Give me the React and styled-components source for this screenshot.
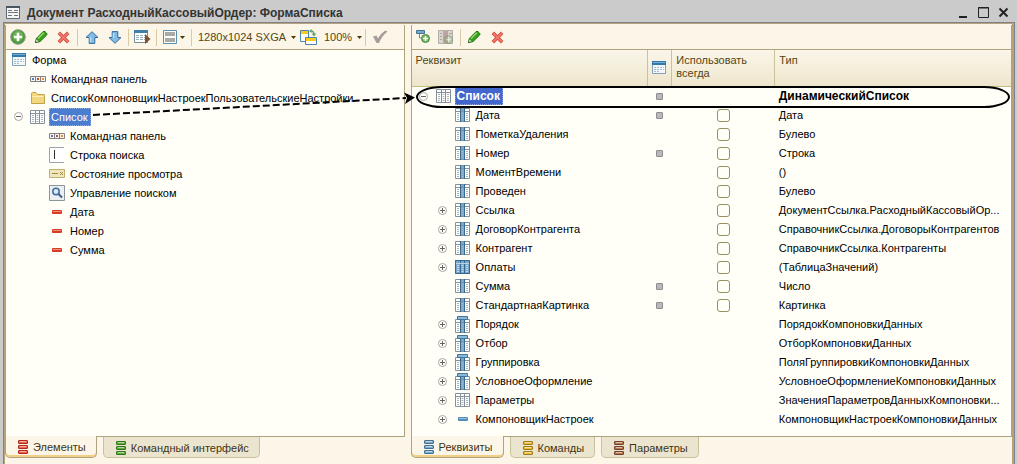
import React, { useState } from 'react';
import styled, { createGlobalStyle, css } from 'styled-components';

const colors = {
  paper: '#fffff8',
  cream: '#fbf6e8',
  tab: '#ebe5cf',
  line: '#aea37c',
  tan: '#b3a47e',
  title: '#cbcbcb',
  brown: '#574513',
  selected: '#4a7cd0',
  focused: '#4267cc'
};

const sizes = {
  text: '11px',
  strong: '12px'
};

const GlobalStyle = createGlobalStyle`
  *, *::before, *::after {
    box-sizing: border-box;
  }
  body {
    margin: 0;
    background: ${colors.title};
    color: #000;
    font-family: 'Liberation Sans', Arial, sans-serif;
    font-size: ${sizes.text};
    line-height: 14px;
  }
  button, select, input {
    font: inherit;
    color: inherit;
    margin: 0;
  }
`;

const Window = styled.div`
  position: relative;
  min-height: 100vh;
  display: flex;
  flex-direction: column;
  padding: 0 2px 0 3px;
  background: ${colors.title};
`;

const TitleBar = styled.header`
  display: flex;
  align-items: center;
  height: 22px;
  padding: 3px 2px 0 3px;
  color: #333;
`;

const Title = styled.h1`
  flex: 1;
  margin: 0 0 0 7px;
  font-size: ${sizes.strong};
  line-height: 18px;
  font-weight: bold;
`;

const WindowButton = styled.button`
  display: flex;
  width: 20px;
  padding: 0;
  justify-content: center;
  border: 0;
  background: none;
  color: #222;
`;

const Body = styled.main`
  flex: 1;
  display: flex;
  gap: 6px;
  border: 1px solid #82808a;
  border-bottom: 0;
  box-shadow: inset 1px 1px ${colors.tan}, inset -2px 0 ${colors.tan};
  padding: 2px 2px 0 1px;
  background: ${colors.cream};
`;

const Pane = styled.section`
  flex: ${({ $grow }) => $grow} 1 0;
  min-width: 0;
  display: flex;
  flex-direction: column;
`;

const Frame = styled.div`
  flex: 1;
  display: flex;
  flex-direction: column;
  border: 1px solid ${colors.line};
  border-top: 0;
  background: ${colors.paper};
`;

const Toolbar = styled.div`
  display: flex;
  align-items: center;
  height: 25px;
  border-bottom: 1px solid ${colors.line};
  background: ${colors.cream};
  color: ${colors.brown};
`;

const ToolButton = styled.button`
  display: flex;
  align-items: center;
  justify-content: center;
  gap: 3px;
  width: ${({ $wide }) => ($wide ? 30 : 23)}px;
  height: 22px;
  padding: 0;
  border: 0;
  background: none;
`;

const Separator = styled.span`
  width: 1px;
  height: 17px;
  margin: 0 2px;
  background: #d8cba3;
`;

const Picker = styled.label`
  display: flex;
  align-items: center;
  gap: 3px;
  padding: 0 1px 0 4px;
`;

const Select = styled.select`
  appearance: none;
  width: ${({ $width }) => $width}px;
  padding: 0;
  border: 0;
  background: none;
`;

const Tree = styled.ul`
  list-style: none;
  margin: 0;
  padding: 0;
`;

const TreeRow = styled.li`
  height: 19px;
  padding-left: ${({ $level }) => ($level ? $level * 19 - 14 : 5)}px;
`;

const Node = styled.div`
  display: flex;
  align-items: center;
  gap: 5px;
  height: 19px;
`;

const Expander = styled.button`
  display: flex;
  flex: none;
  width: 14px;
  padding: 0;
  justify-content: center;
  border: 0;
  background: none;
`;

const Slot = styled.span`
  flex: none;
  display: flex;
  justify-content: center;
  width: 16px;
`;

const Label = styled.span`
  white-space: nowrap;
  ${({ $mark }) =>
    $mark &&
    css`
      margin-left: -2px;
      padding: 2px 3px 2px 2px;
      color: #fff;
      background: ${$mark === 'focus' ? colors.focused : colors.selected};
      outline: 1px dotted ${$mark === 'focus' ? '#8ba2e0' : '#8fb0e4'};
      outline-offset: -1px;
    `};
`;

const TableArea = styled.div`
  position: relative;
`;

const Table = styled.table`
  width: 100%;
  table-layout: fixed;
  border-collapse: collapse;
`;

const Col = styled.col`
  width: ${({ $width }) => $width}px;
`;

const Head = styled.th`
  height: 36px;
  padding: 4px;
  border-right: 1px solid #cdc197;
  border-bottom: 1px solid #c4bd84;
  background: linear-gradient(#faf6e9, #eee5cc);
  color: ${colors.brown};
  font-weight: normal;
  line-height: 13px;
  text-align: left;
  vertical-align: top;
  &:last-child {
    border-right: 0;
  }
`;

const IconHead = styled(Head)`
  vertical-align: middle;
  & svg {
    display: block;
  }
`;

const Row = styled.tr`
  height: 19px;
  ${({ $bold }) =>
    $bold &&
    css`
      font-size: ${sizes.strong};
      font-weight: bold;
    `};
`;

const NameCell = styled.td`
  padding: 0 0 0 ${({ $level }) => 5 + $level * 19}px;
`;

const MarkCell = styled.td`
  padding: 0;
  text-align: center;
`;

const TypeCell = styled.td`
  padding: 0 4px;
  white-space: nowrap;
`;

const Dot = styled.span`
  display: block;
  width: 7px;
  height: 7px;
  margin: 0 auto;
  border: 1px solid #8d8d8d;
  border-radius: 1px;
  background: #b9b9bd;
`;

const Check = styled.input`
  appearance: none;
  display: block;
  width: 13px;
  height: 13px;
  margin: 0 auto;
  border: 1px solid #96915f;
  border-radius: 3px;
  background: ${colors.paper};
  &:checked {
    background: #96915f;
  }
`;

// the ring drawn round the main attribute
const Ring = styled.div`
  position: absolute;
  top: 36px;
  left: 4px;
  right: 1px;
  height: 22px;
  border: 2px solid #000;
  border-radius: 26px / 11px;
  pointer-events: none;
`;

const Arrow = styled.svg`
  position: absolute;
  left: 90px;
  top: 90px;
  pointer-events: none;
`;

const Tabs = styled.div`
  display: flex;
  gap: 6px;
  height: 27px;
  align-items: flex-start;
`;

const Tab = styled.button`
  display: flex;
  align-items: center;
  gap: 5px;
  height: 21px;
  padding: 1px 10px 0 12px;
  border: 1px solid #c9c09c;
  border-top: 0;
  border-radius: 0 0 5px 5px;
  background: ${colors.tab};
  color: #3f3413;
  white-space: nowrap;
  ${({ $active }) =>
    $active &&
    css`
      height: 22px;
      margin-top: -1px;
      border-color: ${colors.line};
      background: ${colors.cream};
      box-shadow: inset 0 -2px #f3cf86;
    `};
`;

const Caret = () => (
  <svg width="5" height="3" viewBox="0 0 5 3">
    <path d="M0 0h5L2.5 3z" fill="#4a3808" />
  </svg>
);

const AddIcon = () => (
  <svg width="16" height="16" viewBox="0 0 16 16">
    <circle cx="8" cy="8" r="7.3" fill="#4e9a3e" stroke="#8d9a86" />
    <circle cx="8" cy="7" r="5.2" fill="#69b153" />
    <path d="M8 3.8v8.4M3.8 8h8.4" stroke="#fff" strokeWidth="2.6" />
  </svg>
);

const PencilIcon = () => (
  <svg width="14" height="14" viewBox="0 0 14 14">
    <path d="M1.5 12.5l1-4.2L9 1.7q1-.8 2 0l1.6 1.5q.8 1 0 1.9L6 11.6z" fill="#36a019" stroke="#207512" />
    <path d="M4 8.5l5.8-5.7" stroke="#91d86d" strokeWidth="1.6" />
    <path d="M1.5 12.5l.8-3.6 2.8 2.7z" fill="#f6f5e5" stroke="#207512" strokeWidth=".6" />
    <path d="M1.2 12.8l.4-1.5 1.2 1.1z" fill="#173e0d" />
  </svg>
);

const DeleteIcon = () => (
  <svg width="13" height="13" viewBox="0 0 13 13">
    <path d="M1.8 1.8l9.4 9.4M11.2 1.8l-9.4 9.4" stroke="#d0483b" strokeWidth="3.4" />
    <path d="M1.8 1.8l9.4 9.4M11.2 1.8l-9.4 9.4" stroke="#f5796a" strokeWidth="1.8" />
  </svg>
);

const MoveIcon = ({ down }) => (
  <svg width="14" height="13" viewBox="0 0 14 13">
    <path
      d={down ? 'M7 12.3L13 6.5H9.8V.6H4.2v5.9H1z' : 'M7 .7L1 6.5h3.2v5.9h5.6V6.5H13z'}
      fill="#7fbde8"
      stroke="#34699d"
    />
    <path d={down ? 'M5.5 2v5' : 'M5.5 6v5'} stroke="#b8dcf4" strokeWidth="1.5" />
  </svg>
);

const PreviewIcon = () => (
  <svg width="17" height="14" viewBox="0 0 17 14">
    <path d="M.5.5h13v12H.5z" fill="#fff" stroke="#778b98" />
    <path d="M0 0h14v3H0z" fill="#3f7fa8" />
    <path d="M2 5.5h10M2 7.5h10M2 9.5h10" stroke="#9bb0bd" strokeDasharray="3 1" />
    <path d="M11 4l5.500 5-5.500 5z" fill="#81502f" />
  </svg>
);

const LayoutIcon = () => (
  <svg width="14" height="14" viewBox="0 0 14 14">
    <path d="M.5.5h13v13H.5z" fill="#fdfdf8" stroke="#5d8fae" />
    <path d="M2 2h10v4H2zM2 8h10v4H2z" fill="#a9a9a6" />
  </svg>
);

const RotateIcon = () => (
  <svg width="17" height="17" viewBox="0 0 17 17">
    <path d="M.5 1.5h8v11h-8z" fill="#fff" stroke="#4d84b0" />
    <path d="M1 2h7v3H1z" fill="#ffc91a" />
    <path d="M5.5 8.500h11v7h-11z" fill="#fff" stroke="#4d84b0" />
    <path d="M6 9h10v3H6z" fill="#ffc91a" />
    <path d="M10 2q4-.5 4 3.500" fill="none" stroke="#61a56a" strokeWidth="1.4" />
    <path d="M11.500 4.500h5L14 7.500zM11.500 0v4L9 2z" fill="#61a56a" />
  </svg>
);

const ApplyIcon = () => (
  <svg width="16" height="14" viewBox="0 0 16 14">
    <path d="M1 6.500l3.500-1 1.500 3Q9 3 13.500.500L15.500 1.500Q10 6 7 13H4.500z" fill="#aa9c9c" />
  </svg>
);

const Plus = () => (
  <g>
    <circle cx="4.500" cy="4.500" r="4" fill="#70b55c" stroke="#58864c" />
    <path d="M4.500 2v5M2 4.500h5" stroke="#fff" strokeWidth="1.5" />
  </g>
);

const AddAttributeIcon = () => (
  <svg width="15" height="14" viewBox="0 0 15 14">
    <path d="M.5.5h8v3h-8z" fill="#79a9ca" stroke="#447296" />
    <path d="M3.500 4v4h2" fill="none" stroke="#7a8b95" />
    <g transform="translate(5 4)">
      <Plus />
    </g>
  </svg>
);

const AddColumnIcon = () => (
  <svg width="16" height="15" viewBox="0 0 16 15">
    <path d="M.5.5h14v13H.5z" fill="#dcd6cc" stroke="#b3aea8" />
    <path d="M5 1h5v12H5z" fill="#bfa3a6" />
    <path d="M2 3.500h2M2 6.500h2M2 9.500h2M11 3.500h3" stroke="#aaa49f" />
    <g transform="translate(6 5)" opacity=".4">
      <Plus />
    </g>
  </svg>
);

const FormIcon = () => (
  <svg width="14" height="13" viewBox="0 0 14 13">
    <path d="M.5.5h13v12H.5z" fill="#f4f8fb" stroke="#84a0b4" />
    <path d="M0 0h14v4H0z" fill="#3379a9" />
    <path d="M1 1.500h12" stroke="#74afd5" />
    <path d="M2 6.500h10M2 8.500h10M2 10.500h6" stroke="#a7bccb" strokeDasharray="2 1" />
  </svg>
);

const DocumentIcon = () => (
  <svg width="14" height="13" viewBox="0 0 14 13">
    <path d="M.5.5h13v12H.5z" fill="#f5f5f5" stroke="#626b72" />
    <path d="M0 1h14" stroke="#49565f" strokeWidth="2" />
    <path d="M2 4.500h4M8 4.500h4M2 6.500h10M2 9.500h4M8 9.500h4" stroke="#6e777e" />
  </svg>
);

const PanelIcon = () => (
  <svg width="16" height="6" viewBox="0 0 16 6">
    <path d="M.5.5h15v5H.5zM5.500 0v6M10.500 0v6" fill="#f5f2ef" stroke="#86817f" />
    <path d="M2 2h2v2H2z" fill="#5284bc" />
    <path d="M7 2h2v2H7z" fill="#cd4535" />
    <path d="M12 2h2v2h-2z" fill="#d79a36" />
  </svg>
);

const FolderIcon = () => (
  <svg width="14" height="12" viewBox="0 0 14 12">
    <path d="M.5 11.500V1.500q0-1 1-1H5l1.500 2H13q.5 0 .5.5v8.500z" fill="#f2d77e" stroke="#c4a14b" />
    <path d="M1.500 4.500h11" stroke="#fff0b5" />
  </svg>
);

const TableIcon = ({ fill, cap }) => (
  <svg width="16" height={cap ? 17 : 14} viewBox={cap ? '0 -3 16 17' : '0 0 16 14'}>
    <path d="M.5.5h14v13H.5z" fill="#fff" />
    {fill === 'mid' && <path d="M5 0h5v14H5z" fill="#78a9cd" />}
    {fill === 'all' && <path d="M0 0h15v14H0z" fill="#78a9cd" />}
    <path
      d="M.5.5h14v13H.5zM5.500 1v13M9.500 1v13"
      fill="none"
      stroke={fill === 'all' ? '#38678f' : '#84919b'}
    />
    <path d="M1 3.500h13" stroke={fill === 'all' ? '#b7d4e8' : '#84919b'} />
    <path d="M3 5v8M7.500 5v8M12 5v8" stroke={fill === 'all' ? '#c1dcec' : '#aab4bb'} strokeWidth="2" strokeDasharray="1 1" />
    {fill === 'mid' && <path d="M5.500 0v14M9.500 0v14" stroke="#37698f" />}
    {cap && <path d="M2.500-2.500h10v3h-10z" fill="#8bbad8" stroke="#40759d" />}
  </svg>
);

const SearchLineIcon = () => (
  <svg width="16" height="16" viewBox="0 0 16 16">
    <path d="M15 .5H.5v15H15" fill="#fff" stroke="#a0a3ad" />
    <path d="M5.500 3v9" stroke="#333" />
  </svg>
);

const ViewStateIcon = () => (
  <svg width="16" height="9" viewBox="0 0 16 9">
    <path d="M.5.5h15v8H.5z" fill="#f0e6bb" stroke="#c1ae72" />
    <path d="M3 4.500h6M11 3l3 3M14 3l-3 3" stroke="#9e8846" />
  </svg>
);

const SearchControlIcon = () => (
  <svg width="16" height="16" viewBox="0 0 16 16">
    <path d="M.5.5h15v15H.5z" fill="#eceff1" stroke="#8c949b" />
    <circle cx="7" cy="6.500" r="3.200" fill="#dcebf7" stroke="#416d9d" strokeWidth="1.500" />
    <path d="M9.500 9l3.500 3.500" stroke="#365f8e" strokeWidth="2" />
  </svg>
);

const BarIcon = ({ color }) => (
  <svg width="10" height="4" viewBox="0 0 10 4">
    <rect width="10" height="4" rx="1" fill={color} />
    <path d="M1 1.500h8" stroke="#fff" strokeOpacity=".45" />
  </svg>
);

const StackIcon = ({ color, edge }) => (
  <svg width="10" height="14" viewBox="0 0 10 14">
    {[0, 5, 10].map(y => (
      <g key={y}>
        <rect x=".5" y={y + 0.5} width="9" height="3" rx=".5" fill={color} stroke={edge} />
        <path d={`M2 ${y + 1.5}h6`} stroke="#fff" strokeOpacity=".5" />
      </g>
    ))}
  </svg>
);

const ToggleIcon = ({ open }) => (
  <svg width="9" height="9" viewBox="0 0 9 9">
    <circle cx="4.500" cy="4.500" r="4" fill="#fff" stroke="#a9a7a0" />
    <path d={open ? 'M2 4.500h5' : 'M2 4.500h5M4.500 2v5'} stroke="#68665f" />
  </svg>
);

const elements = [
  { level: 0, icon: <FormIcon />, name: 'Форма' },
  { level: 1, icon: <PanelIcon />, name: 'Командная панель' },
  { level: 1, icon: <FolderIcon />, name: 'СписокКомпоновщикНастроекПользовательскиеНастройки' },
  { level: 1, icon: <TableIcon />, name: 'Список', open: true, mark: 'select' },
  { level: 2, icon: <PanelIcon />, name: 'Командная панель' },
  { level: 2, icon: <SearchLineIcon />, name: 'Строка поиска' },
  { level: 2, icon: <ViewStateIcon />, name: 'Состояние просмотра' },
  { level: 2, icon: <SearchControlIcon />, name: 'Управление поиском' },
  { level: 2, icon: <BarIcon color="#d93a20" />, name: 'Дата' },
  { level: 2, icon: <BarIcon color="#d93a20" />, name: 'Номер' },
  { level: 2, icon: <BarIcon color="#d93a20" />, name: 'Сумма' }
];

const field = <TableIcon fill="mid" />;
const setting = <TableIcon fill="mid" cap />;

const attributes = [
  { name: 'Список', type: 'ДинамическийСписок', icon: <TableIcon />, root: true, dot: true },
  { name: 'Дата', type: 'Дата', icon: field, dot: true, check: true },
  { name: 'ПометкаУдаления', type: 'Булево', icon: field, check: true },
  { name: 'Номер', type: 'Строка', icon: field, dot: true, check: true },
  { name: 'МоментВремени', type: '()', icon: field, check: true },
  { name: 'Проведен', type: 'Булево', icon: field, check: true },
  { name: 'Ссылка', type: 'ДокументСсылка.РасходныйКассовыйОр...', icon: field, more: true, check: true },
  { name: 'ДоговорКонтрагента', type: 'СправочникСсылка.ДоговорыКонтрагентов', icon: field, more: true, check: true },
  { name: 'Контрагент', type: 'СправочникСсылка.Контрагенты', icon: field, more: true, check: true },
  { name: 'Оплаты', type: '(ТаблицаЗначений)', icon: <TableIcon fill="all" />, more: true, check: true },
  { name: 'Сумма', type: 'Число', icon: field, dot: true, check: true },
  { name: 'СтандартнаяКартинка', type: 'Картинка', icon: field, dot: true, check: true },
  { name: 'Порядок', type: 'ПорядокКомпоновкиДанных', icon: setting, more: true },
  { name: 'Отбор', type: 'ОтборКомпоновкиДанных', icon: setting, more: true },
  { name: 'Группировка', type: 'ПоляГруппировкиКомпоновкиДанных', icon: setting, more: true },
  { name: 'УсловноеОформление', type: 'УсловноеОформлениеКомпоновкиДанных', icon: setting, more: true },
  { name: 'Параметры', type: 'ЗначенияПараметровДанныхКомпоновки...', icon: <TableIcon />, more: true },
  { name: 'КомпоновщикНастроек', type: 'КомпоновщикНастроекКомпоновкиДанных', icon: <BarIcon color="#4f8fba" />, more: true }
];

const TabStrip = ({ items }) => {
  const [active, setActive] = useState(0);
  return (
    <Tabs role="tablist">
      {items.map((item, i) => (
        <Tab
          key={item.name}
          role="tab"
          aria-selected={i === active}
          $active={i === active}
          onClick={() => setActive(i)}
        >
          <StackIcon color={item.color} edge={item.edge} />
          {item.name}
        </Tab>
      ))}
    </Tabs>
  );
};

const ElementsPane = () => (
  <Pane $grow={400}>
    <Frame>
      <Toolbar>
        <ToolButton aria-label="Добавить"><AddIcon /></ToolButton>
        <ToolButton aria-label="Изменить"><PencilIcon /></ToolButton>
        <ToolButton aria-label="Удалить"><DeleteIcon /></ToolButton>
        <Separator />
        <ToolButton aria-label="Вверх"><MoveIcon /></ToolButton>
        <ToolButton aria-label="Вниз"><MoveIcon down /></ToolButton>
        <Separator />
        <ToolButton aria-label="Проверить"><PreviewIcon /></ToolButton>
        <Separator />
        <ToolButton aria-label="Разделение" $wide><LayoutIcon /><Caret /></ToolButton>
        <Separator />
        <Picker>
          <Select $width={90} aria-label="Разрешение">
            <option>1280x1024 SXGA</option>
          </Select>
          <Caret />
        </Picker>
        <ToolButton aria-label="Повернуть"><RotateIcon /></ToolButton>
        <Picker>
          <Select $width={30} aria-label="Масштаб">
            <option>100%</option>
          </Select>
          <Caret />
        </Picker>
        <Separator />
        <ToolButton aria-label="Применить"><ApplyIcon /></ToolButton>
      </Toolbar>
      <Tree>
        {elements.map((el, i) => (
          <TreeRow key={i} $level={el.level}>
            <Node>
              {el.level > 0 && (el.open ? (
                <Expander aria-label="Свернуть"><ToggleIcon open /></Expander>
              ) : (
                <Expander as="span" />
              ))}
              <Slot>{el.icon}</Slot>
              <Label $mark={el.mark}>{el.name}</Label>
            </Node>
          </TreeRow>
        ))}
      </Tree>
    </Frame>
    <TabStrip
      items={[
        { name: 'Элементы', color: '#ee624d', edge: '#ad2b1c' },
        { name: 'Командный интерфейс', color: '#63ad3d', edge: '#34731d' }
      ]}
    />
  </Pane>
);

const AttributesPane = () => (
  <Pane $grow={602}>
    <Frame>
      <Toolbar>
        <ToolButton aria-label="Добавить реквизит"><AddAttributeIcon /></ToolButton>
        <ToolButton aria-label="Добавить колонку" disabled><AddColumnIcon /></ToolButton>
        <Separator />
        <ToolButton aria-label="Изменить"><PencilIcon /></ToolButton>
        <ToolButton aria-label="Удалить"><DeleteIcon /></ToolButton>
      </Toolbar>
      <TableArea>
        <Table>
          <colgroup>
            <Col />
            <Col $width={24} />
            <Col $width={103} />
            <Col />
          </colgroup>
          <thead>
            <tr>
              <Head>Реквизит</Head>
              <IconHead aria-label="На форме"><FormIcon /></IconHead>
              <Head>Использовать всегда</Head>
              <Head>Тип</Head>
            </tr>
          </thead>
          <tbody>
            {attributes.map(attr => (
              <Row key={attr.name} $bold={attr.root}>
                <NameCell $level={attr.root ? 0 : 1}>
                  <Node>
                    {attr.root || attr.more ? (
                      <Expander aria-label={attr.root ? 'Свернуть' : 'Развернуть'}>
                        <ToggleIcon open={attr.root} />
                      </Expander>
                    ) : (
                      <Expander as="span" />
                    )}
                    <Slot>{attr.icon}</Slot>
                    <Label $mark={attr.root && 'focus'}>{attr.name}</Label>
                  </Node>
                </NameCell>
                <MarkCell>{attr.dot && <Dot />}</MarkCell>
                <MarkCell>
                  {attr.check && <Check type="checkbox" aria-label={attr.name} />}
                </MarkCell>
                <TypeCell>{attr.type}</TypeCell>
              </Row>
            ))}
          </tbody>
        </Table>
        <Ring />
      </TableArea>
    </Frame>
    <TabStrip
      items={[
        { name: 'Реквизиты', color: '#7faccb', edge: '#416f96' },
        { name: 'Команды', color: '#e6bd3d', edge: '#a37c17' },
        { name: 'Параметры', color: '#b77b57', edge: '#733f26' }
      ]}
    />
  </Pane>
);

const App = () => (
  <Window>
    <GlobalStyle />
    <TitleBar>
      <DocumentIcon />
      <Title>Документ РасходныйКассовыйОрдер: ФормаСписка</Title>
      <WindowButton aria-label="Свернуть">
        <svg width="11" height="11"><path d="M1 10h8" stroke="currentColor" strokeWidth="2" /></svg>
      </WindowButton>
      <WindowButton aria-label="Развернуть">
        <svg width="11" height="11">
          <path d="M.5.5h10v10H.5zM0 1h11" fill="none" stroke="currentColor" />
        </svg>
      </WindowButton>
      <WindowButton aria-label="Закрыть">
        <svg width="11" height="11">
          <path d="M1.500 1.500l8 8M9.500 1.500l-8 8" stroke="currentColor" strokeWidth="2" />
        </svg>
      </WindowButton>
    </TitleBar>
    <Body>
      <ElementsPane />
      <AttributesPane />
    </Body>
    <Arrow width="326" height="30">
      <path d="M3 25L316 8" stroke="#000" strokeWidth="2" strokeDasharray="7 3" />
      <path d="M325 7.500l-11-5 3 5.500-2 6z" fill="#000" />
    </Arrow>
  </Window>
);

export default App;
